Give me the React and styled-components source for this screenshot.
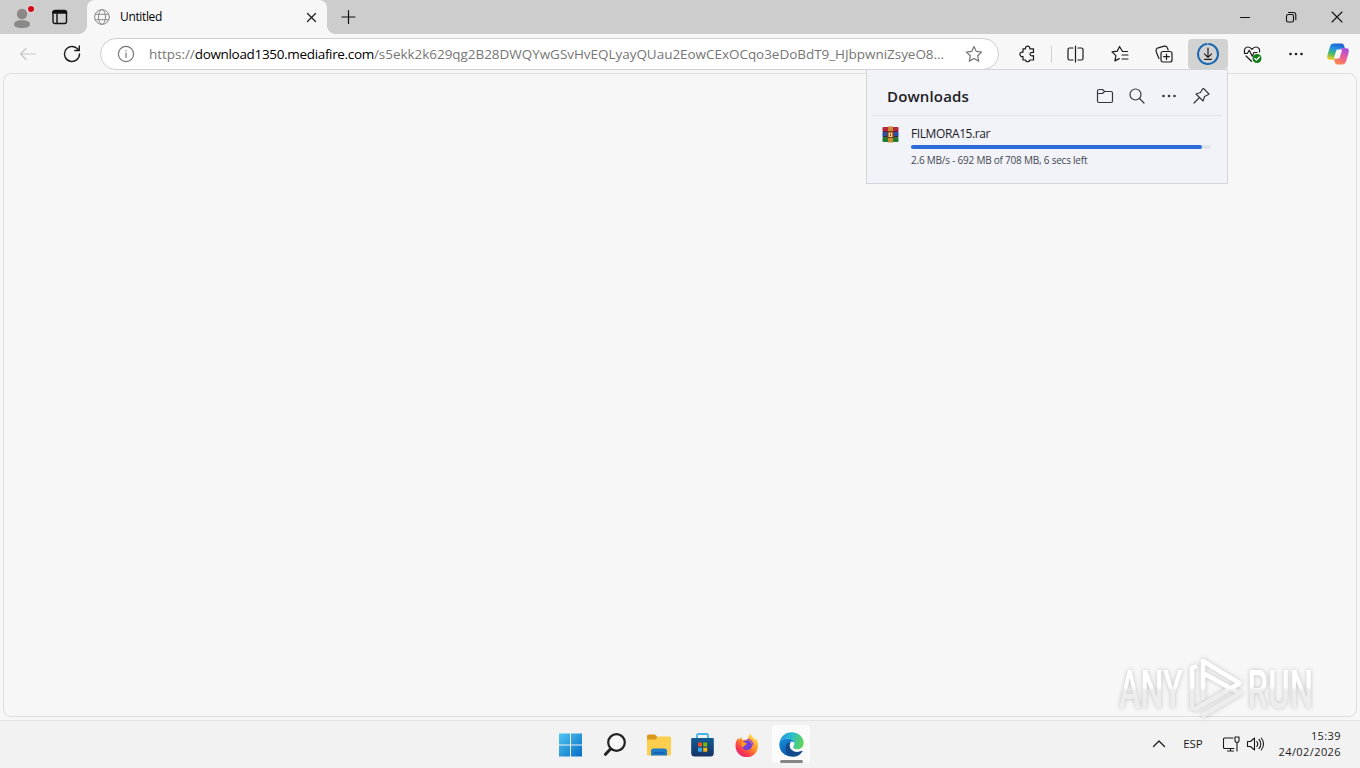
import styled, { createGlobalStyle } from "styled-components";

const GlobalStyle = createGlobalStyle`
  * {
    box-sizing: border-box;
  }

  body {
    margin: 0;
    overflow: hidden;
    background: #f7f7f7;
    color: #1b1b1b;
    font-family: "Open Sans", "Noto Sans", sans-serif;
    font-size: 12px;
  }
`

const Desktop = styled.div`
  position: relative;
  display: flex;
  flex-direction: column;
  width: 1360px;
  height: 768px;
  overflow: hidden;
`

const TabStrip = styled.header`
  display: flex;
  align-items: center;
  height: 34px;
  background: #cdcdcd;
`

const StripButton = styled.button`
  display: flex;
  align-items: center;
  justify-content: center;
  width: ${({ $width }) => $width}px;
  height: 34px;
  padding: 0;
  border: none;
  background: transparent;
  color: #111;
`

const Tab = styled.div`
  position: relative;
  display: flex;
  align-items: center;
  width: 240px;
  height: 34px;
  margin-left: 11px;
  padding: 0 9px 0 7px;
  border-radius: 8px 8px 0 0;
  background: #f7f7f7;

  &::before,
  &::after {
    content: "";
    position: absolute;
    bottom: 0;
    width: 8px;
    height: 8px;
  }

  &::before {
    left: -8px;
    background: radial-gradient(circle at 0 0, #cdcdcd 7.5px, #f7f7f7 8px);
  }

  &::after {
    right: -8px;
    background: radial-gradient(circle at 100% 0, #cdcdcd 7.5px, #f7f7f7 8px);
  }
`

const TabTitle = styled.span`
  flex: 1;
  margin-left: 10px;
  color: #000;
  font-size: 12px;
  line-height: 16px;
  letter-spacing: -0.35px;
`

const WindowControls = styled.div`
  display: flex;
  margin-left: auto;
`

const Toolbar = styled.nav`
  display: flex;
  align-items: center;
  height: 39px;
  padding: 1px 2px 0 6px;
`

const ToolButton = styled.button`
  display: flex;
  flex-shrink: 0;
  align-items: center;
  justify-content: center;
  width: ${({ $width }) => $width || 44}px;
  height: 30px;
  padding: 0;
  border: none;
  background: transparent;
  color: ${({ $muted }) => ($muted ? '#c6c6c6' : '#1b1b1b')};
`

const ActiveTool = styled(ToolButton)`
  width: 40px;
  margin: 0 2px;
  border-radius: 4px;
  background: #d2d2d2;
`

const Separator = styled.i`
  width: 1px;
  height: 17px;
  margin: 0 2px;
  background: #d0d0d0;
`

const AddressBar = styled.div`
  display: flex;
  align-items: center;
  width: 899px;
  height: 32px;
  margin: 0 6px;
  padding: 0 15px 0 16px;
  border: 1px solid #cfcfcf;
  border-radius: 16px;
  background: #fff;
  color: #767676;
`

const Url = styled.div`
  flex: 1;
  margin-left: 14px;
  font-size: 13.5px;
  line-height: 20px;
  white-space: nowrap;
`

const UrlPart = styled.span`
  color: ${({ $host }) => ($host ? '#000' : '#767676')};
  letter-spacing: ${({ $host }) => ($host ? -0.33 : -0.04)}px;
`

const Page = styled.main`
  height: 644px;
  margin: 0 3px;
  border: 1px solid #dedede;
  border-radius: 8px;
  background: #f7f7f7;
`

const DownloadsPanel = styled.section`
  position: absolute;
  top: 69px;
  left: 866px;
  width: 362px;
  height: 115px;
  padding: 0 5px;
  border: 1px solid #d3d5dd;
  background: #f1f3f8;
`

const PanelHeader = styled.div`
  display: flex;
  align-items: center;
  height: 46px;
  padding: 7px 5px 0 15px;
  border-bottom: 1px solid #e3e4ea;
`

const PanelTitle = styled.h1`
  flex: 1;
  margin: 0;
  color: #1d2026;
  font-size: 15px;
  font-weight: 600;
  line-height: 20px;
  letter-spacing: 0.15px;
`

const PanelButton = styled(ToolButton)`
  width: 32px;
  color: #33373f;
`

const DownloadRow = styled.div`
  display: flex;
  padding: 10px 11px 0 10px;
`

const DownloadInfo = styled.div`
  width: 300px;
  margin-left: 12px;
`

const FileName = styled.div`
  color: #1d2026;
  font-size: 12px;
  line-height: 16px;
  letter-spacing: -0.4px;
`

const Track = styled.div`
  height: 4px;
  margin-top: 3px;
  border-radius: 2px;
  background: #e3e4ea;
`

const Fill = styled.div`
  height: 4px;
  border-radius: 2px;
  background: #2a6ad9;
`

const Status = styled.div`
  margin-top: 4px;
  color: #44474f;
  font-size: 10px;
  line-height: 14px;
  letter-spacing: -0.22px;
`

const Taskbar = styled.footer`
  display: grid;
  grid-template-columns: 549px 264px 1fr;
  align-items: center;
  height: 48px;
  margin-top: 3px;
  padding-bottom: 2px;
  border-top: 1px solid #e4e4e4;
  background: #f2f2f2;
`

const Apps = styled.div`
  display: flex;
  grid-column: 2;
`

const AppSlot = styled.div`
  display: flex;
  align-items: center;
  justify-content: center;
  width: 44px;
  height: 40px;
`

const AppTile = styled.div`
  display: flex;
  flex-direction: column;
  align-items: center;
  justify-content: flex-end;
  width: 38px;
  height: 38px;
  border-radius: 4px;
  background: ${({ $open }) => ($open ? '#fbfbfb' : 'transparent')};

  svg {
    margin-bottom: 3px;
  }

  &::after {
    content: "";
    width: 23px;
    height: 3px;
    border-radius: 2px;
    background: ${({ $open }) => ($open ? '#858585' : 'transparent')};
  }
`

const Tray = styled.div`
  display: flex;
  grid-column: 3;
  align-items: center;
  justify-content: flex-end;
  padding-right: 19px;
  color: #1a1a1a;
`

const Language = styled.span`
  margin: 0 19px 0 17px;
  font-size: 11.5px;
  letter-spacing: -0.1px;
`

const TrayIcons = styled.div`
  display: flex;
  gap: 6px;
`

const Clock = styled.div`
  margin-left: 15px;
  font-size: 11px;
  line-height: 16px;
  letter-spacing: 0.41px;
  text-align: right;
`

const Watermark = styled.svg`
  position: absolute;
  top: 650px;
  left: 1110px;
  overflow: visible;
  filter: drop-shadow(0 0 2px rgba(0, 0, 0, 0.22));
`

const Line = styled.svg`
  display: block;
  flex-shrink: 0;
  overflow: visible;
  fill: none;
  stroke: currentColor;
  stroke-width: ${({ $weight }) => $weight || 1.2};
  stroke-linecap: round;
  stroke-linejoin: round;
`

function Icon({ size = 20, weight, children }) {
    return <Line width={size} height={size} viewBox={`0 0 ${size} ${size}`} $weight={weight}>{children}</Line>
}

function Dots() {
    return (
        <Icon>
            <g fill="currentColor" stroke="none">
                <circle cx="4.5" cy="10" r="1.3" />
                <circle cx="10" cy="10" r="1.3" />
                <circle cx="15.5" cy="10" r="1.3" />
            </g>
        </Icon>
    )
}

function Tabs() {
    return (
        <TabStrip>
            <StripButton $width={44}>
                <svg width="24" height="24" viewBox="0 0 24 24">
                    <circle cx="12" cy="9" r="5.2" fill="#8b8885" />
                    <path d="M4 19.5c0-3 3.5-4.3 8-4.3s8 1.3 8 4.3c0 2.4-3.5 3.5-8 3.5s-8-1.1-8-3.5z" fill="#8b8885" />
                    <circle cx="21" cy="4" r="4" fill="#dcdcdc" />
                    <circle cx="21" cy="4" r="3" fill="#d3091c" />
                </svg>
            </StripButton>
            <StripButton $width={32}>
                <Icon size={16} weight={1.4}>
                    <rect x="1" y="1.5" width="13.5" height="13" rx="2" />
                    <path d="M1.7 3.2h12" strokeWidth="3" />
                    <path d="M5 5v9" />
                </Icon>
            </StripButton>
            <Tab>
                <Line width="16" height="16" viewBox="0 0 16 16" $weight={1} color="#8a8a8a">
                    <circle cx="8" cy="8" r="7.4" />
                    <ellipse cx="8" cy="8" rx="3.5" ry="7.4" />
                    <path d="M1.3 5.3h13.4M1.3 10.7h13.4" />
                </Line>
                <TabTitle>Untitled</TabTitle>
                <Icon size={14}><path d="M3.5 3.5l8 8M11.5 3.5l-8 8" /></Icon>
            </Tab>
            <StripButton $width={42}>
                <Icon size={16}><path d="M8.5 1.5v13M2 8h13" /></Icon>
            </StripButton>
            <WindowControls>
                <StripButton $width={46}>
                    <Icon size={12} weight={1}><path d="M1.5 6.5h9" /></Icon>
                </StripButton>
                <StripButton $width={46}>
                    <Icon size={12} weight={1.1}>
                        <rect x="1.5" y="3.5" width="7" height="7.5" rx="1.5" />
                        <path d="M3.5 1.5h5a2.3 2.3 0 0 1 2.3 2.3v5" />
                    </Icon>
                </StripButton>
                <StripButton $width={46}>
                    <Icon size={12} weight={1.1}><path d="M1 1l10 10M11 1L1 11" /></Icon>
                </StripButton>
            </WindowControls>
        </TabStrip>
    )
}

function BrowserToolbar() {
    return (
        <Toolbar>
            <ToolButton $muted>
                <Icon><path d="M17.5 10h-15M8 4.5L2.5 10 8 15.5" /></Icon>
            </ToolButton>
            <ToolButton>
                <Icon weight={1.4}><path d="M17.5 10a7.5 7.5 0 1 1-2.6-5.7L17 6.2M17.3 2v4.5h-4.5" /></Icon>
            </ToolButton>
            <AddressBar>
                <Icon size={18}>
                    <circle cx="9" cy="9" r="7.6" />
                    <path d="M9 8v4.5M9 5.5v.3" />
                </Icon>
                <Url>
                    <UrlPart>https://</UrlPart>
                    <UrlPart $host>download1350.mediafire.com</UrlPart>
                    <UrlPart>/s5ekk2k629qg2B28DWQYwGSvHvEQLyayQUau2EowCExOCqo3eDoBdT9_HJbpwniZsyeO8...</UrlPart>
                </Url>
                <Icon size={18}>
                    <path d="M9 1.5l2.3 4.9 5.3.7-3.9 3.7 1 5.3L9 13.5l-4.7 2.6 1-5.3-3.9-3.7 5.3-.7z" />
                </Icon>
            </AddressBar>
            <ToolButton>
                <Icon>
                    <path d="M6 4.8h2.5a2.2 2.2 0 1 1 4.3 0h3.7v3.7c-2.7-.6-3.4.5-3.4 1.6s.7 2.2 3.4 1.6v4.3h-3.7a2.2 2.2 0 0 1-4.3 0H6v-3.5a2.3 2.3 0 1 1 0-4.3z" />
                </Icon>
            </ToolButton>
            <Separator />
            <ToolButton>
                <Icon>
                    <path d="M7 4H3.500A1.500 1.500 0 0 0 2 5.500v9A1.500 1.500 0 0 0 3.500 16H7M12 4h3.500A1.500 1.500 0 0 1 17 5.500v9a1.500 1.500 0 0 1-1.500 1.500H12M9.500 2v16" />
                </Icon>
            </ToolButton>
            <ToolButton>
                <Icon>
                    <path d="M17.5 7.5h-5L9.5 2.5 7.3 7.2l-5.3.7 3.9 3.700-1 5.300 4.300-2.300M12 11h6M12 15h6" />
                </Icon>
            </ToolButton>
            <ToolButton>
                <Icon>
                    <rect x="7" y="7.5" width="11" height="10.5" rx="2" />
                    <path d="M12.5 10v5.5M9.7 12.7h5.6M5 14.5L2.5 8.500C1.500 6 2.200 4.500 4.200 3.800l6-1.600c1.700-.4 2.700.3 3.200 1.800l.8 2" />
                </Icon>
            </ToolButton>
            <ActiveTool>
                <Icon size={24}>
                    <circle cx="12" cy="12" r="10" stroke="#1768b0" strokeWidth="2" strokeDasharray="60 2.8" transform="rotate(-84 12 12)" />
                    <path d="M12 6v9M8.5 11.8L12 15.3l3.5-3.5M8.5 17.3h7" />
                </Icon>
            </ActiveTool>
            <ToolButton>
                <Icon>
                    <path d="M2.8 9C1.5 5.5 3.3 3 6 3c2 0 3.2 1.2 4 2.3C10.8 4.200 12 3 14 3c2.7 0 4.3 2.5 3.4 5M2.3 9.5h3l2-3.3 2.9 6 1.8-3.7h3M4 12l5.5 5.3" />
                    <circle cx="15" cy="14.5" r="4.5" fill="#137b18" stroke="none" />
                    <path d="M12.8 14.5l1.6 1.5 3-3" stroke="#fff" />
                </Icon>
            </ToolButton>
            <ToolButton><Dots /></ToolButton>
            <ToolButton $width={40}><CopilotLogo /></ToolButton>
        </Toolbar>
    )
}

function CopilotLogo() {
    return (
        <svg width="24" height="24" viewBox="0 0 24 24">
            <defs>
                <linearGradient id="copilotCool" x1="0.6" y1="0" x2="0.3" y2="1">
                    <stop offset="0" stopColor="#1d5fd3" />
                    <stop offset="0.35" stopColor="#2894e8" />
                    <stop offset="0.65" stopColor="#43b96b" />
                    <stop offset="1" stopColor="#f0cb22" />
                </linearGradient>
                <linearGradient id="copilotWarm" x1="0.7" y1="0" x2="0.3" y2="1">
                    <stop offset="0" stopColor="#a64ee0" />
                    <stop offset="0.5" stopColor="#ed5c9a" />
                    <stop offset="1" stopColor="#fb8a4b" />
                </linearGradient>
            </defs>
            <path d="M7.5 1.5h8c1.7 0 2.3 1.2 2.8 2.8L19 6.5h-3c-2 0-2.8 1-3.3 2.7L10.5 15c-.6 2-1.4 2.7-3 2.7H4c-2.7 0-3.3-2-2.5-4.7L4 4.5c.6-2 1.7-3 3.5-3z" fill="url(#copilotCool)" />
            <path d="M16.5 22.5h-5c-1.7 0-2.3-1.2-2.8-2.8L8 17.5c2 0 2.8-1 3.300-2.700L13.500 9c.6-2 1.400-2.700 3-2.700H20c2.700 0 3.300 2 2.500 4.700L20 19.500c-.6 2-1.700 3-3.500 3z" fill="url(#copilotWarm)" />
            <path d="M11.500 7.500h3.300c1 0 1.300.7 1 1.600l-2.100 6.300c-.3.800-.8 1.200-1.600 1.200H9.200c-1 0-1.300-.7-1-1.600l2-6.300c.2-.8.600-1.200 1.300-1.200z" fill="#f7f7f7" />
        </svg>
    )
}

function RarIcon() {
    return (
        <svg width="17" height="17" viewBox="0 0 17 17">
            <rect x="0.5" y="1" width="16" height="5" rx="1" fill="#b3263b" />
            <rect x="0.5" y="6" width="16" height="5" fill="#2b4fa8" />
            <rect x="0.5" y="11" width="16" height="5" rx="1" fill="#257a32" />
            <path d="M1 5.5h15M1 10.5h15" stroke="#3a2030" strokeWidth="0.8" />
            <rect x="6" y="0.5" width="5" height="16" fill="#c98a31" />
            <rect x="5" y="5" width="7" height="7" rx="1" fill="#7c3a1d" />
            <path d="M6.5 6.5h4V11h-4z" fill="#f2cf86" />
            <path d="M8.5 7.5v2.5" stroke="#8b4a22" />
        </svg>
    )
}

const download = {
    name: 'FILMORA15.rar',
    status: '2.6 MB/s - 692 MB of 708 MB, 6 secs left',
    progress: 97,
}

function Downloads() {
    return (
        <DownloadsPanel>
            <PanelHeader>
                <PanelTitle>Downloads</PanelTitle>
                <PanelButton>
                    <Icon>
                        <path d="M2.5 5A1.5 1.5 0 0 1 4 3.5h3.5L9.5 5.5H16A1.5 1.5 0 0 1 17.5 7v8a1.5 1.5 0 0 1-1.5 1.5H4A1.5 1.5 0 0 1 2.5 15zM2.5 7.5h5l2-2" />
                    </Icon>
                </PanelButton>
                <PanelButton>
                    <Icon><circle cx="8.5" cy="8.5" r="5.5" /><path d="M12.5 12.5l4.5 4.5" /></Icon>
                </PanelButton>
                <PanelButton><Dots /></PanelButton>
                <PanelButton>
                    <Icon>
                        <path d="M12.5 2.5l5.5 5.5-1.5 1-3 1.5-1.5 4.5-7-7 4.5-1.5 2-3.5zM8 12l-5 5" />
                    </Icon>
                </PanelButton>
            </PanelHeader>
            <DownloadRow>
                <RarIcon />
                <DownloadInfo>
                    <FileName>{download.name}</FileName>
                    <Track><Fill style={{ width: `${download.progress}%` }} /></Track>
                    <Status>{download.status}</Status>
                </DownloadInfo>
            </DownloadRow>
        </DownloadsPanel>
    )
}

function StartLogo() {
    return (
        <svg width="24" height="24" viewBox="0 0 24 24">
            <linearGradient id="start" x1="0" y1="0" x2="24" y2="24" gradientUnits="userSpaceOnUse">
                <stop offset="0" stopColor="#4fc8f2" />
                <stop offset="1" stopColor="#0669c4" />
            </linearGradient>
            <path d="M0 .5h11v11H0zM12 .5h11v11H12zM0 12.5h11v11H0zM12 12.5h11v11H12z" fill="url(#start)" />
        </svg>
    )
}

function SearchLogo() {
    return (
        <svg width="24" height="24" viewBox="0 0 24 24" fill="none" stroke="#222" strokeLinecap="round">
            <circle cx="13.5" cy="9.5" r="8.3" fill="#f8f8f8" strokeWidth="2.2" />
            <path d="M7.5 16l-5 5.3" strokeWidth="3" />
        </svg>
    )
}

function ExplorerLogo() {
    return (
        <svg width="26" height="24" viewBox="0 0 26 24">
            <path d="M1 3a1.5 1.5 0 0 1 1.5-1.5H9L11.5 4v4H1z" fill="#d9981c" />
            <path d="M1 6.5h8.5L12 3.5h11.500A1.5 1.5 0 0 1 25 5v16a1.5 1.5 0 0 1-1.500 1.500h-21A1.5 1.5 0 0 1 1 21z" fill="#fbcf4d" />
            <path d="M5 22.5V18a2.5 2.5 0 0 1 2.500-2.500h11A2.5 2.5 0 0 1 21 18v4.500z" fill="#1f7bc9" />
            <path d="M7.5 20h11" stroke="#0b57a0" strokeWidth="1.2" />
        </svg>
    )
}

function StoreLogo() {
    return (
        <svg width="24" height="24" viewBox="0 0 24 24">
            <linearGradient id="store" x1="0" y1="0" x2="0" y2="1">
                <stop offset="0" stopColor="#145b94" />
                <stop offset="1" stopColor="#173363" />
            </linearGradient>
            <path d="M6 6V2.300A1.300 1.300 0 0 1 7.300 1h8.400A1.300 1.300 0 0 1 17 2.300V6" fill="none" stroke="#43b5e8" strokeWidth="1.8" />
            <path d="M.2 6a1 1 0 0 1 1-1h20.600a1 1 0 0 1 1 1v14a3.500 3.500 0 0 1-3.500 3.500H3.700A3.500 3.500 0 0 1 .2 20z" fill="url(#store)" />
            <path d="M7 9.500h4v4H7z" fill="#f25022" />
            <path d="M12.200 9.500h4v4h-4z" fill="#7fba00" />
            <path d="M7 14.700h4v4H7z" fill="#32a8ee" />
            <path d="M12.200 14.700h4v4h-4z" fill="#ffb900" />
        </svg>
    )
}

function FirefoxLogo() {
    return (
        <svg width="24" height="24" viewBox="0 0 24 24">
            <linearGradient id="fox" x1="0.85" y1="0.1" x2="0.2" y2="0.95">
                <stop offset="0" stopColor="#ffe34b" />
                <stop offset="0.45" stopColor="#ff8a26" />
                <stop offset="0.8" stopColor="#f9374f" />
                <stop offset="1" stopColor="#e0257e" />
            </linearGradient>
            <path d="M.5 13C.5 8.500 2 6.500 3.500 5l.5 2 2.500-3 .7 3.200C9 6.200 12 7 13 7c0-3 1-5.500 3-6.500 0 3.500 3 4 4.500 6.500.5-.3.500-1 .3-1.700C22.500 7 23 10 23 13a11.200 11.200 0 0 1-22.500 0z" fill="url(#fox)" />
            <circle cx="12" cy="12.2" r="5" fill="#7440d8" />
            <path d="M6 10c2-2 4-1 6 .5l-1.500 1.800c-1.300.3-2 .8-1.500 2-2.500-.3-3-2.500-3-4.300z" fill="#ff9a28" />
            <path d="M12 6.500c3.500-.5 6 2 6 6" fill="none" stroke="#a741c6" strokeWidth="1.2" />
        </svg>
    )
}

function EdgeLogo() {
    return (
        <svg width="25" height="25" viewBox="0 0 24 24">
            <defs>
                <linearGradient id="edgeTop" x1="0" y1="0.3" x2="1" y2="0.5">
                    <stop offset="0" stopColor="#1c96de" />
                    <stop offset="0.5" stopColor="#2bc0c8" />
                    <stop offset="1" stopColor="#62d354" />
                </linearGradient>
                <linearGradient id="edgeSide" x1="0" y1="0" x2="0.5" y2="1">
                    <stop offset="0" stopColor="#1492df" />
                    <stop offset="1" stopColor="#0d51a6" />
                </linearGradient>
            </defs>
            <path d="M.4 11.200C1 5 5.800.300 12 .300c7.200 0 11.700 5.200 11.700 10.200 0 3.700-2.700 6-6 6-2.500 0-4.200-.9-4.200-1.900 0-.7 1.200-1.100 1.200-3.100C14.700 8.500 11.500 6.300 8 6.300c-4 0-6.800 2.200-7.600 4.900z" fill="url(#edgeTop)" />
            <path d="M.3 12C.3 8.500 3.800 6.300 8 6.300c3.500 0 5.800 1.700 6.500 3.700-1-.5-2-.8-3-.8-2.500 1-3.300 3-3.300 5.300 0 4.500 4.300 7 8.300 7l-1 1.500C7.500 25 .3 20 .3 12z" fill="url(#edgeSide)" />
            <path d="M11.500 9.200c-3.500 1-5 3.300-5 6.300 0 4.500 3.300 8.200 7.800 8.200 3.700-.3 6.300-2 8.200-5 .3-.5-.1-.9-.7-.6-1.300.7-3 1-4.300 1-4 0-7.200-2.600-7.200-5.900 0-1.700.6-3 1.200-4z" fill="#124a8c" />
        </svg>
    )
}

const apps = [
    { id: 'start', Logo: StartLogo },
    { id: 'search', Logo: SearchLogo },
    { id: 'explorer', Logo: ExplorerLogo },
    { id: 'store', Logo: StoreLogo },
    { id: 'firefox', Logo: FirefoxLogo },
    { id: 'edge', Logo: EdgeLogo, open: true },
]

function AnyRunMark() {
    return (
        <Watermark width="210" height="75" viewBox="0 0 210 75">
            <defs>
                <linearGradient id="mark" x1="0" y1="0" x2="0" y2="75" gradientUnits="userSpaceOnUse">
                    <stop offset="0.5" stopColor="#fff" />
                    <stop offset="0.54" stopColor="#ededed" />
                </linearGradient>
                <linearGradient id="letters" x1="0" y1="-21" x2="0" y2="-17" gradientUnits="userSpaceOnUse">
                    <stop offset="0" stopColor="#fff" />
                    <stop offset="1" stopColor="#ededed" />
                </linearGradient>
            </defs>
            <g fill="url(#letters)" fontFamily="Roboto, sans-serif" fontSize="53" fontWeight="500">
                <text transform="translate(9 57.5) scale(0.61 1)">ANY</text>
                <text transform="translate(137.5 57.5) scale(0.62 1)">RUN</text>
            </g>
            <g fill="none" stroke="url(#mark)" strokeWidth="4.5" strokeLinejoin="round">
                <path d="M87 16l-5 2v42" />
                <path d="M93 50V11l38 23M93 23l36 20M84 60l46-27M92 66l40-24" />
            </g>
        </Watermark>
    )
}

function SystemTray() {
    return (
        <Tray>
            <Icon size={14} weight={1.3}><path d="M1.5 9.5L7 4l5.5 5.5" /></Icon>
            <Language>ESP</Language>
            <TrayIcons>
                <Icon size={18} weight={1.1}>
                    <path d="M11 3H2.5a1 1 0 0 0-1 1v8.5a1 1 0 0 0 1 1H12M5.5 16h6M8.5 13.5V16M13 2h4v4l-1 1.3h-2L13 6zM15 7.3V16" />
                </Icon>
                <Icon size={18} weight={1.1}>
                    <path d="M1.5 6.5h3l4-3.5v12l-4-3.5h-3zM10.8 6.5a4 4 0 0 1 0 5M13 4.5a6.5 6.5 0 0 1 0 9M15.2 3a9 9 0 0 1 0 12" />
                </Icon>
            </TrayIcons>
            <Clock>
                <div>15:39</div>
                <div>24/02/2026</div>
            </Clock>
        </Tray>
    )
}

export default function App() {
    return (
        <Desktop>
            <GlobalStyle />
            <Tabs />
            <BrowserToolbar />
            <Page />
            <Taskbar>
                <Apps>
                    {apps.map(({ id, Logo, open }) => {
                        return <AppSlot key={id}><AppTile $open={open}><Logo /></AppTile></AppSlot>
                    })}
                </Apps>
                <SystemTray />
            </Taskbar>
            <Downloads />
            <AnyRunMark />
        </Desktop>
    )
}
